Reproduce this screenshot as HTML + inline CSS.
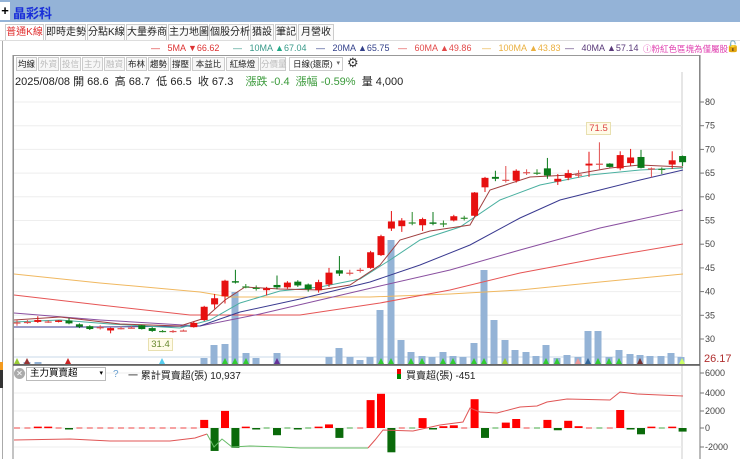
<!DOCTYPE html>
<html><head><meta charset="utf-8"><style>
*{margin:0;padding:0;box-sizing:border-box}
body{width:740px;height:459px;overflow:hidden;background:#fff;font-family:"Liberation Sans","Noto Sans CJK TC",sans-serif;position:relative}
.a{position:absolute;white-space:nowrap}
.tab{position:absolute;top:24px;height:17px;border:1px solid #ccc;border-bottom:none;background:#fafafa;font-size:10px;line-height:15px;text-align:center;color:#222;white-space:nowrap;overflow:visible}
.btn{position:absolute;top:57px;height:14px;border:1px solid #ccc;background:#f7f7f7;font-size:8.5px;line-height:12px;text-align:center;color:#222;white-space:nowrap}
.dis{color:#bbb}
.lg{position:absolute;top:43px;font-size:9px;white-space:nowrap}
</style></head><body>
<div class="a" style="left:0;top:0;width:740px;height:22px;background:#94b3d7"></div>
<div class="a" style="left:0;top:2px;width:10px;height:18px;background:#fff;font-size:13px;line-height:18px;text-align:center;font-weight:bold">+</div>
<div class="a" style="left:13px;top:3px;font-size:13px;font-weight:bold;color:#1a2fd8">晶彩科</div>
<div class="tab" style="left:5px;width:39px;background:#fff;color:#e03030">普通K線</div>
<div class="tab" style="left:45px;width:41px">即時走勢</div>
<div class="tab" style="left:87px;width:38px">分點K線</div>
<div class="tab" style="left:126px;width:41px">大量券商</div>
<div class="tab" style="left:168px;width:40px">主力地圖</div>
<div class="tab" style="left:209px;width:40px">個股分析</div>
<div class="tab" style="left:250px;width:24px">猶設</div>
<div class="tab" style="left:275px;width:22px">筆記</div>
<div class="tab" style="left:298px;width:36px">月營收</div>
<div class="a" style="left:0;top:40px;width:740px;height:1px;background:#ddd"></div>
<div class="a" style="left:2px;top:41px;width:1px;height:418px;background:#aaa"></div>
<div class="a" style="left:0;top:362px;width:3px;height:8px;background:#f39a1e"></div>
<div class="a" style="left:0;top:370px;width:3px;height:18px;background:#333"></div>
<div class="lg" style="left:151px;color:#d33">—&nbsp;&nbsp; 5MA ▼66.62</div>
<div class="lg" style="left:233px;color:#3a9a8a">—&nbsp;&nbsp; 10MA <span style="color:#2a8">▲</span>67.04</div>
<div class="lg" style="left:316px;color:#33408a">—&nbsp;&nbsp; 20MA ▲65.75</div>
<div class="lg" style="left:398px;color:#e24a4a">—&nbsp;&nbsp; 60MA ▲49.86</div>
<div class="lg" style="left:482px;color:#eab040">—&nbsp;&nbsp; 100MA ▲43.83</div>
<div class="lg" style="left:565px;color:#5a3a7a">—&nbsp;&nbsp; 40MA ▲57.14</div>
<div class="lg" style="left:643px;font-size:8.5px;color:#e040b0">ⓘ粉紅色區塊為僅屬股</div>
<div class="a" style="top:40px;left:726px;font-size:11px">🔓</div>
<div class="btn" style="left:16px;width:21px">均線</div>
<div class="btn dis" style="left:38px;width:21px">外資</div>
<div class="btn dis" style="left:60px;width:21px">投信</div>
<div class="btn dis" style="left:82px;width:21px">主力</div>
<div class="btn dis" style="left:104px;width:21px">融資</div>
<div class="btn" style="left:126px;width:21px">布林</div>
<div class="btn" style="left:148px;width:21px">趨勢</div>
<div class="btn" style="left:170px;width:21px">撐壓</div>
<div class="btn" style="left:192px;width:33px">本益比</div>
<div class="btn" style="left:226px;width:33px">紅綠燈</div>
<div class="btn dis" style="left:260px;width:26px">分價量</div>
<div class="btn" style="left:289px;width:54px;background:#fff;text-align:left;padding-left:3px">日線(還原) <span style="font-size:7px;color:#666;float:right;margin-right:2px">▾</span></div>
<div class="a" style="left:347px;top:55px;font-size:13px;color:#333">⚙</div>
<div class="a" style="left:15px;top:73px;font-size:11px;color:#222">2025/08/08 開 68.6 &nbsp;高 68.7 &nbsp;低 66.5 &nbsp;收 67.3 &nbsp;&nbsp;&nbsp;<span style="color:#3a9a3a">漲跌 -0.4 &nbsp;漲幅 -0.59%</span> &nbsp;量 4,000</div>

<svg class="a" style="left:0;top:0" width="740" height="459" id="s"></svg>
<div class="a" style="left:26px;top:367px;width:80px;height:14px;border:1px solid #bbb;background:#fff;font-size:9.5px;line-height:12px;padding-left:3px">主力買賣超<span style="float:right;font-size:7px;margin-right:2px">▾</span></div>
<div class="a" style="left:14px;top:368px;width:11px;height:11px;border-radius:50%;background:#aaa;color:#fff;font-size:8px;line-height:11px;text-align:center">✕</div>
<div class="a" style="left:113px;top:369px;font-size:10px;color:#6aa0d0">?</div>
<div class="a" style="left:128px;top:367px;font-size:10px;color:#222">一 累計買賣超(張) 10,937</div>
<div class="a" style="left:397px;top:369px;width:4px;height:5px;background:#e00"></div>
<div class="a" style="left:397px;top:374px;width:4px;height:5px;background:#080"></div>
<div class="a" style="left:406px;top:367px;font-size:10px;color:#222">買賣超(張) -451</div>
<div class="a" style="left:586px;top:122px;width:25px;height:13px;border:1px solid #e8e0b0;background:#fffbe8;font-size:9.5px;line-height:11px;text-align:center;color:#d44">71.5</div>
<div class="a" style="left:148px;top:338px;width:25px;height:13px;border:1px solid #e8e0b0;background:#fffbe8;font-size:9.5px;line-height:11px;text-align:center;color:#6a8a30">31.4</div>
<div class="a" style="left:704px;top:353px;font-size:11px;color:#b03030">26.17</div>
<script>
var s=document.getElementById('s'),h='';
function Y(p){return 102+(80-p)*4.74}
function L(x1,y1,x2,y2,c,w){h+='<line x1="'+x1+'" y1="'+y1+'" x2="'+x2+'" y2="'+y2+'" stroke="'+c+'" stroke-width="'+(w||1)+'"/>'}
function R(x,y,w,hh,c){h+='<rect x="'+x+'" y="'+y+'" width="'+w+'" height="'+hh+'" fill="'+c+'"/>'}
function T(x,y,t,c){h+='<text x="'+x+'" y="'+y+'" font-size="9" fill="'+(c||'#333')+'" font-family="Liberation Sans">'+t+'</text>'}
h+='<rect x="13.5" y="55.5" width="686" height="309" fill="none" stroke="#999"/>';
L(13,55,13,459,'#888');L(700,55,700,459,'#777');L(682,72,682,459,'#ccc');
for(var p=30;p<=80;p+=5){var y=Y(p);L(14,y,682,y,'#eee');L(700,y,704,y,'#777');T(705,y+3,p,'#444')}
L(14,357,682,357,'#c8d8ea');
L(13,365,700,365,'#555',1.5);
var lz=[[6000,373],[4000,393],[2000,411],[0,428],[-2000,447]];
lz.forEach(function(a){L(14,a[1],682,a[1],'#eee');L(700,a[1],704,a[1],'#777');T(705,a[1]+3,a[0],'#444')});
var C=[[33.4,33.5,34,32.8],[33.5,33.6,34,33.2],[33.6,34,34.8,33.4],[33.7,33.7,34,33.4],[33.6,33.9,34,33.5],[33.9,33.3,34.4,33.1],[33.1,32.6,33.3,32.3],[32.7,32.1,32.9,31.9],[32.5,32.5,32.9,32],[31.8,32.3,32.4,31.2],[32.3,32.3,32.6,32],[32.4,32.4,32.7,32.2],[32.9,32.1,33,32],[32.3,31.7,32.5,31.5],[31.7,31.6,31.9,31.4],[31.5,31.7,31.9,31.3],[31.7,31.8,32,31.6],[32.5,33.4,33.7,32.4],[34,36.8,37,33.8],[37.3,38.6,39.5,36.4],[39,42.3,42.5,37.5],[42.2,41.9,44.6,41.7],[41.1,40.9,41.6,40.7],[40.8,40.6,41.3,40.2],[40.3,40.7,41,39.2],[41.4,40.9,43.4,40.5],[40.9,41.9,42.2,40.6],[42.1,41.3,42.4,41],[41.5,40.5,41.7,40],[40.3,42,42.5,39.8],[41.5,44,45,41],[44.5,43.8,47.5,43.3],[44,44,44.6,43.4],[44.4,44.6,45,44],[45,48.3,48.6,44.8],[47.7,51.7,52,47.5],[53.3,54.8,57,52.8],[53.8,55,55.5,52.6],[54.6,54.5,56.8,54],[54,55.3,55.6,52.8],[54.6,54.3,56.8,54],[54.4,54.2,55,53.6],[55,55.9,56.2,54.8],[55.6,55.4,56,55],[56,60.9,61,55.8],[62,64,64.2,61],[64.2,63.8,65.5,63.3],[63.6,63.6,66.5,63],[63.4,65.5,65.8,63],[65.2,65.2,65.8,64.6],[65.1,65,65.8,64.6],[66,64.5,68.2,63.8],[63.2,63.8,64.8,62.5],[64,65,65.7,63.5],[64.5,64.7,65.6,64],[66.6,67,69.5,64.2],[67,67,71.5,65.8],[67,66.3,67.1,66.2],[66,68.8,69.6,65.6],[67.1,68.3,70.1,66.5],[68.4,66.1,69.9,66],[65.9,66,66.2,64.1],[65.9,65.8,66.2,64.8],[66.8,67.7,69.6,65.9],[68.6,67.3,68.7,66.5]];
var X=function(i){return 17+10.4*i};
var VB=[[27,362],[38,362],[204,358],[214,345],[225,344],[235,292],[246,353],[256,358],[277,353],[329,357],[339,348],[350,357],[360,360],[370,357],[380,310],[391,240],[401,340],[411,352],[422,356],[432,357],[443,352],[453,356],[463,357],[474,343],[484,270],[494,320],[505,340],[515,350],[526,352],[536,356],[546,345],[557,358],[567,355],[578,357],[588,331],[598,331],[609,357],[619,350],[630,354],[640,355],[650,356],[661,356],[671,353],[681,357]];
VB.forEach(function(v){R(v[0]-3.5,v[1],7,364-v[1],'#94b3d6')});
var tri=[[17,'#9c3'],[27,'#933'],[68,'#c22'],[162,'#5ce'],[225,'#3c3'],[235,'#3c3'],[246,'#3c3'],[277,'#639'],[381,'#3c3'],[391,'#3c3'],[411,'#3c3'],[422,'#3c3'],[443,'#3c3'],[453,'#3c3'],[474,'#3c3'],[484,'#3c3'],[505,'#9c3'],[546,'#3c3'],[557,'#3c3'],[578,'#e99'],[588,'#369'],[598,'#3c3'],[609,'#3c3'],[619,'#3c3'],[640,'#733'],[682,'#cf6']];
tri.forEach(function(t){h+='<polygon points="'+(t[0]-3)+',364 '+(t[0]+3)+',364 '+t[0]+',358" fill="'+t[1]+'"/>'});
function PL(pts,c){h+='<polyline fill="none" stroke="'+c+'" stroke-width="1" points="'+pts+'"/>'}
PL('14,274 100,283 200,292 230,297 300,297 370,297 450,294 520,290 600,282 683,274','#f0b860');
PL('14,295 100,305 190,315 230,315 300,315 380,303 450,290 520,273 600,258 683,244','#e65555');
PL('14,313 100,320 200,326 260,314 320,300 380,286 450,270 520,250 600,228 683,210','#8a50a0');
PL('14,327 100,327 200,326 240,312 300,299 370,282 420,265 470,245 520,218 560,200 600,190 640,180 683,170','#3a3a90');
PL('14,322 60,320 110,324 180,328 210,320 240,303 280,291 320,287 360,279 390,260 420,240 460,227 500,200 540,185 590,175 640,170 683,168','#4ab0a0');
PL('14,320 60,317 120,324 180,326 205,318 225,300 245,287 280,289 320,290 350,285 380,265 400,240 430,231 470,225 490,190 530,177 570,175 610,168 640,165 683,167','#a04040');
for(var i=0;i<65;i++){var c=C[i],x=X(i),up=c[1]>=c[0],col=up?'#e61010':'#0a7a1a';
 if(Math.abs(c[1]-c[0])<0.25)col=up?'#e05050':'#2a8a2a';
 L(x,Y(c[2]),x,Y(c[3]),col);var t=Y(Math.max(c[0],c[1])),b=Y(Math.min(c[0],c[1]));
 R(x-3.5,t,7,Math.max(1.2,b-t),col)}
var B={2:150,3:150,5:-150,18:900,19:-2550,20:1900,21:-2200,22:150,23:-150,25:-800,27:-150,29:150,30:400,31:-1100,34:3100,35:3800,36:-2700,39:1100,40:-150,41:200,42:300,44:3200,45:-1100,47:600,48:1000,51:900,52:-250,53:800,54:200,58:2000,59:-100,60:-700,61:150,63:150,64:-400};
for(var i=0;i<65;i++){var b=B[i]||0,x=X(i),y0=428;if(b==0){L(x-3,y0,x+3,y0,i<17||i%2?'#e44':'#4a4');continue}
 var hh=b/2000*18;if(b>0)R(x-4,y0-hh,8,Math.max(1.5,hh),'#f00');else R(x-4,y0,8,Math.max(1.5,-hh),'#0a6a0a')}
PL('14,440 70,439 110,441 170,441 195,438 207,434','#e05555');
PL('207,434 214,447 222,439 232,447 250,446 280,447 300,448 340,448 368,448','#66bb66');
PL('368,448 375,440 383,430 413,431 440,425 463,422 470,408 480,412 497,413 520,407 537,406 547,402 567,399 610,400 620,392 637,394 660,395 683,396','#e05555');
s.innerHTML=h;
</script>
</body></html>
